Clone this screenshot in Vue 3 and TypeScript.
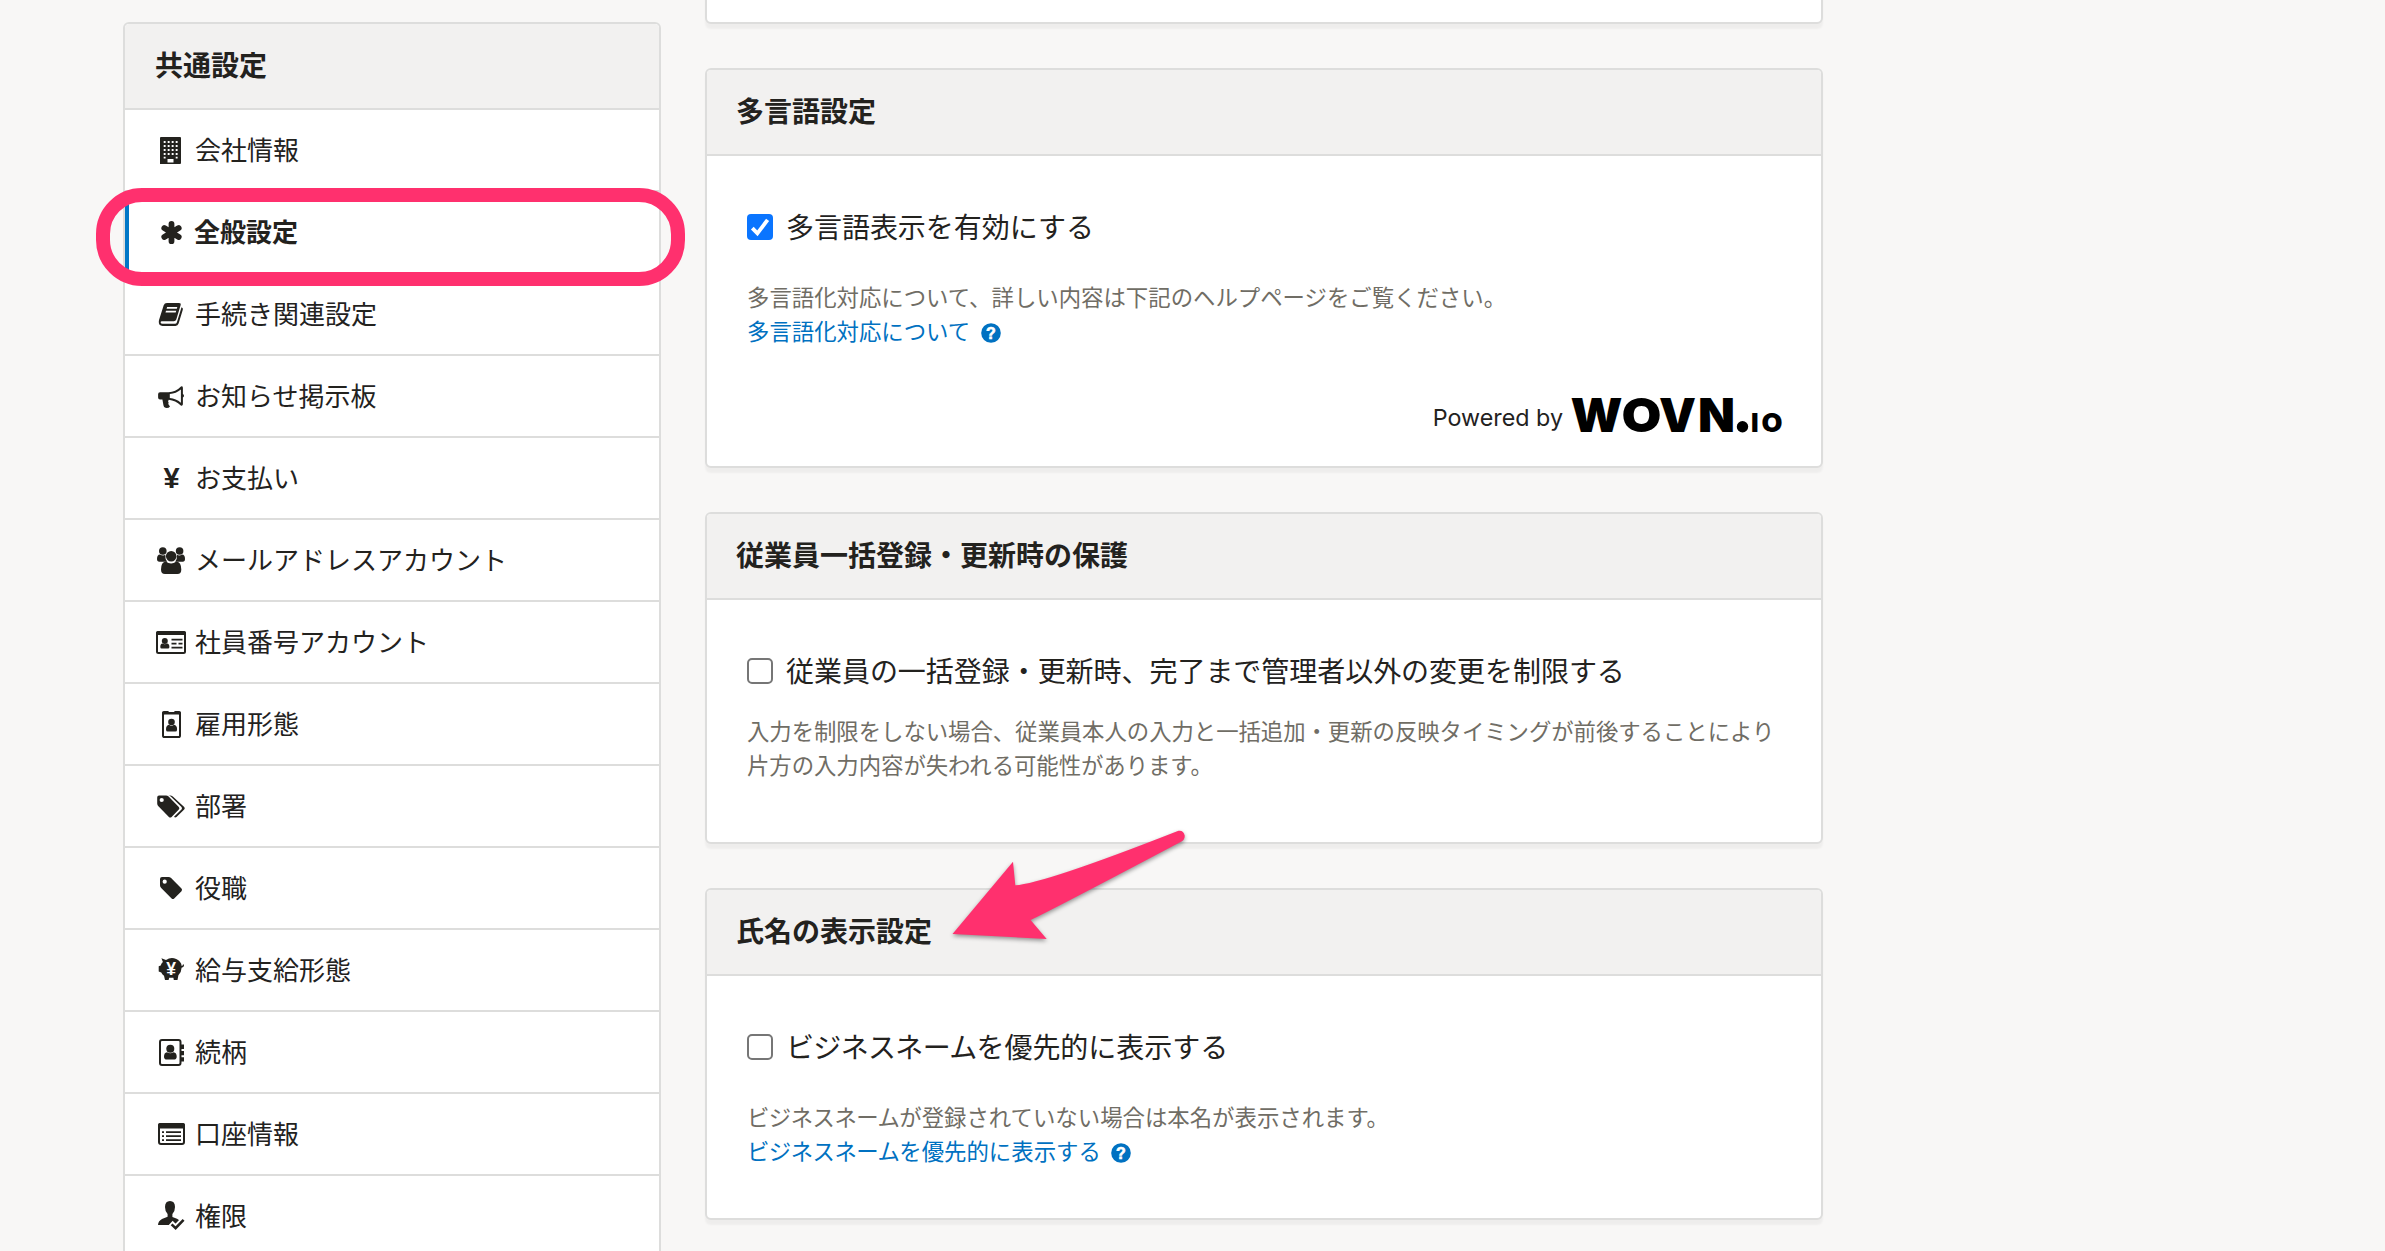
<script setup lang="ts">
interface MenuItem {
  label: string
  icon: string
  active?: boolean
}

const menu: MenuItem[] = [
  { label: '会社情報', icon: 'building' },
  { label: '全般設定', icon: 'asterisk', active: true },
  { label: '手続き関連設定', icon: 'book' },
  { label: 'お知らせ掲示板', icon: 'bullhorn' },
  { label: 'お支払い', icon: 'yen' },
  { label: 'メールアドレスアカウント', icon: 'users' },
  { label: '社員番号アカウント', icon: 'idcard' },
  { label: '雇用形態', icon: 'badge' },
  { label: '部署', icon: 'tags' },
  { label: '役職', icon: 'tag' },
  { label: '給与支給形態', icon: 'pig' },
  { label: '続柄', icon: 'address' },
  { label: '口座情報', icon: 'list' },
  { label: '権限', icon: 'usercheck' },
]
</script>

<template>
  <div class="page">
    <nav class="sidebar">
      <h2 class="head">共通設定</h2>
      <ul class="menu">
        <li v-for="item in menu" :key="item.label" class="item" :class="{ active: item.active }">
          <svg class="icon" viewBox="0 0 30 30" width="30" height="30">
            <g v-if="item.icon === 'building'">
              <path fill-rule="evenodd" d="M5 2H24Q25 2 25 3V28Q25 29 24 29H4V3Q4 2 5 2ZM11.5 24V27.5H17.5V24Z" />
              <path class="cut" stroke-width="1.9" stroke-dasharray="1.9 2.1" d="M7.7 7H22M7.7 11H22M7.7 15H22M7.7 19H22M7.7 22.6H9.6M19.7 22.6H22" />
            </g>
            <g v-else-if="item.icon === 'asterisk'" class="line" stroke-width="5.8" stroke-linecap="round">
              <path d="M15.5 6.8V24.2M8.3 11L22.7 20M22.7 11L8.3 20" />
            </g>
            <g v-else-if="item.icon === 'book'">
              <path fill-rule="evenodd" d="M11 4H23Q25.3 4 24.6 6.2L20.3 20.5Q19.7 22.3 17.8 22.3H6Q4.4 22.3 4.6 23.4Q4.8 24.8 6.6 24.8H19Q20.4 24.8 20.9 23.3L25.5 8.2Q27.4 9 26.8 10.8L22.6 24.6Q21.8 27 19.5 27H6.5Q2.5 26.6 2.8 22.5Q2.9 21 3.5 19.5L7.7 6.2Q8.5 4 11 4ZM11.1 8L10.6 9.7H20.8L21.3 8ZM10 11.8L9.5 13.5H19.7L20.2 11.8Z" />
            </g>
            <g v-else-if="item.icon === 'bullhorn'">
              <path fill-rule="evenodd" d="M4 11.2H12.5Q19.5 11 25 5.4Q26.8 5 26.9 6.8V13Q28 13.6 28 14.8Q28 16 26.9 16.5V23.2Q26.6 25.2 24.8 24.4Q19.5 19.5 12.8 18.7Q11.4 20 12.6 21.6Q11.6 23 13.3 24.6L14 25.4Q12.6 27.3 9.5 26.8Q7.7 26.5 7.5 24.5L6.4 18.5H4Q2.1 18.5 2.1 16.4V13.3Q2.1 11.2 4 11.2ZM24.9 8.4Q20 12.5 13.8 12.9V17Q20 17.6 24.9 21.7Z" />
            </g>
            <text v-else-if="item.icon === 'yen'" class="yen" x="15.5" y="25" text-anchor="middle" font-size="29">¥</text>
            <g v-else-if="item.icon === 'users'">
              <circle cx="6.8" cy="6" r="3.8" /><circle cx="23.6" cy="6" r="3.8" />
              <path d="M1 14Q1 9.5 4 9.5Q7 11.4 9.3 9.8Q9 14.5 11.2 16.8H3.4Q1 16.8 1 14ZM29 14Q29 9.5 26 9.5Q23.3 11.4 21.1 9.8Q21.2 14.5 19.2 16.8H26.8Q29 16.8 29 14Z" />
              <circle cx="15.2" cy="11.3" r="5.3" />
              <path d="M5 24.5Q5 17 9.8 16.4Q15 20.6 20.4 16.4Q25.3 17 25.3 24.5Q25.3 29 21.4 29H9Q5 29 5 24.5Z" />
            </g>
            <g v-else-if="item.icon === 'idcard'">
              <rect class="line" x="1" y="5" width="28" height="21" rx="1.5" stroke-width="2" />
              <path d="M0 8V6Q0 4 2 4H28Q30 4 30 6V8Z" />
              <circle cx="8.8" cy="14" r="3" />
              <path d="M4.3 20Q4.3 16.6 6.5 16.4Q8.8 18 11 16.4Q13.4 16.6 13.4 20Q13.4 21.6 12 21.6H5.6Q4.3 21.6 4.3 20Z" />
              <path class="line" stroke-width="1.8" d="M15.5 12.7H26.5M15.5 16.7H20.5M22.5 16.7H26.5M15.5 20.6H26.5" />
            </g>
            <g v-else-if="item.icon === 'badge'">
              <rect class="line" x="7" y="4" width="17" height="24" rx="1.6" stroke-width="2" />
              <path d="M6 5.5V3.5Q6 2 7.8 2H12.6V3.8H18.4V2H23.2Q25 2 25 3.5V5.5Z" />
              <circle cx="15.5" cy="13" r="3.3" />
              <path d="M10 20.4Q10 16.3 13 15.8Q15.5 17.6 18 15.8Q21.1 16.3 21.1 20.4Q21.1 22.6 19.3 22.6H11.7Q10 22.6 10 20.4Z" />
            </g>
            <g v-else-if="item.icon === 'tags'">
              <path fill-rule="evenodd" d="M3 4.5H10Q11.5 4.5 12.6 5.5L22.8 16Q24 17.3 22.8 18.6L15.6 26Q14.2 27 12.9 26L2.4 15.3Q1.2 14 1.2 12.5V6.4Q1.2 4.5 3 4.5ZM5.7 6.9A2.1 2.1 0 1 0 5.7 11.1A2.1 2.1 0 1 0 5.7 6.9Z" />
              <path d="M12.2 4.5H14.2Q15.6 4.5 16.8 5.6L28.2 16Q29.4 17.3 28.2 18.6L20.5 26Q19 27 18 25.7L25.5 18.5Q26.5 17.3 25.5 16L15 5.7Q13.7 4.6 12.2 4.5Z" />
            </g>
            <g v-else-if="item.icon === 'tag'">
              <path fill-rule="evenodd" d="M6 4H12.5Q14 4 15.1 5L25.5 15.6Q26.6 16.9 25.5 18.2L18.2 25.6Q16.9 26.6 15.6 25.6L5.2 15Q4 13.8 4 12.3V6Q4 4 6 4ZM8.7 6.6A2.1 2.1 0 1 0 8.7 10.8A2.1 2.1 0 1 0 8.7 6.6Z" />
            </g>
            <g v-else-if="item.icon === 'pig'">
              <path d="M5.4 3.2L10 5.1Q15 1.6 20.2 4.1Q25.2 6.5 25.7 10.9Q26.8 11 26.9 9.6H28Q28.2 12.3 25.6 12.7Q25.5 17 22.4 20.2L21.5 25H17.8L17.4 22.7H13.2L12.6 25H9L8 20.8Q6 19.5 5.3 17.6L2.7 16.6V11.3L4.7 10.6Q5.3 8.4 6.9 7.1Z" />
              <text class="coin" x="15.2" y="19.5" text-anchor="middle" font-size="17.5">¥</text>
            </g>
            <g v-else-if="item.icon === 'address'">
              <rect class="line" x="4" y="3" width="20.5" height="25" rx="2" stroke-width="2" />
              <path d="M25 7.5H28V12H25ZM25 14H28V18.2H25ZM25 20.2H28V24.5H25Z" />
              <circle cx="14.3" cy="11.8" r="4" />
              <path d="M8 19.6Q8 15.7 11 15.2Q14.3 17.4 17.6 15.2Q20.7 15.7 20.7 19.6Q20.7 22.4 18.6 22.4H10Q8 22.4 8 19.6Z" />
            </g>
            <g v-else-if="item.icon === 'list'">
              <rect class="line" x="3" y="5" width="25" height="20" rx="2" stroke-width="2" />
              <path d="M2 9.5V6Q2 4 4 4H27Q29 4 29 6V9.5Z" />
              <path class="line" stroke-width="1.8" d="M6 13.2H8M10 13.2H25M6 17.2H8M10 17.2H25M6 21.2H8M10 21.2H25" />
            </g>
            <g v-else>
              <path d="M14 0Q19 0 19 6Q19 10.5 16.4 13V16L21 17.8Q23.3 19 24 20.6L19.6 24H2Q2.1 20 6 18L11.6 15.8V13Q9 10.5 9 6Q9 0 14 0Z" />
              <path class="cut" stroke-width="6" d="M14.6 22L19.6 26.8L28.4 17.8" />
              <path class="line" stroke-width="2.6" d="M15.6 23.4L19.6 27.2L27.6 18.8" />
            </g>
          </svg>
          <span class="label">{{ item.label }}</span>
        </li>
      </ul>
    </nav>

    <main class="content">
      <section class="card stub"></section>

      <section class="card">
        <h2 class="head">多言語設定</h2>
        <div class="body lang">
          <label class="check">
            <svg class="box" viewBox="0 0 26 26" width="26" height="26">
              <rect width="26" height="26" rx="4" fill="#0a75ff" />
              <path d="M5.3 14.2L10.4 19.4L20.6 5.8" fill="none" stroke="#fff" stroke-width="3.8" />
            </svg>
            <span>多言語表示を有効にする</span>
          </label>
          <p class="help wide">
            多言語化対応について、詳しい内容は下記のヘルプページをご覧ください。<br />
            <a class="link">多言語化対応について<svg class="q" viewBox="0 0 20 20" width="20" height="20">
              <circle cx="10" cy="10" r="9.8" fill="#0071c1" />
              <text x="10" y="15.7" text-anchor="middle">?</text>
            </svg></a>
          </p>
          <div class="powered">
            <span>Powered by</span>
            <svg class="logo" viewBox="0 0 210 34" width="210" height="34">
              <text x="-0.5" y="34" font-size="46.7" textLength="52" lengthAdjust="spacingAndGlyphs">W</text>
              <text x="50.5" y="34" font-size="46.7" textLength="40" lengthAdjust="spacingAndGlyphs">O</text>
              <text x="88" y="34" font-size="46.7" textLength="37" lengthAdjust="spacingAndGlyphs">V</text>
              <text x="127" y="34" font-size="46.7" textLength="37" lengthAdjust="spacingAndGlyphs">N</text>
              <circle cx="171.5" cy="28.7" r="5.7" />
              <text class="io" x="180" y="34" font-size="26">i</text>
              <text class="io" x="190.5" y="34" font-size="26" textLength="21" lengthAdjust="spacingAndGlyphs">o</text>
            </svg>
          </div>
        </div>
      </section>

      <section class="card">
        <h2 class="head">従業員一括登録・更新時の保護</h2>
        <div class="body protect">
          <label class="check">
            <span class="box empty"></span>
            <span>従業員の一括登録・更新時、完了まで管理者以外の変更を制限する</span>
          </label>
          <p class="help tight">
            入力を制限をしない場合、従業員本人の入力と一括追加・更新の反映タイミングが前後することにより<br />
            片方の入力内容が失われる可能性があります。
          </p>
        </div>
      </section>

      <section class="card">
        <h2 class="head">氏名の表示設定</h2>
        <div class="body name">
          <label class="check">
            <span class="box empty"></span>
            <span><span class="kana">ビジネスネーム</span>を優先的に表示する</span>
          </label>
          <p class="help wide">
            <span class="kana">ビジネスネーム</span>が登録されていない場合は本名が表示されます。<br />
            <a class="link"><span class="kana">ビジネスネーム</span>を優先的に表示する<svg class="q" viewBox="0 0 20 20" width="20" height="20">
              <circle cx="10" cy="10" r="9.8" fill="#0071c1" />
              <text x="10" y="15.7" text-anchor="middle">?</text>
            </svg></a>
          </p>
        </div>
      </section>
    </main>

    <div class="ring"></div>
    <svg class="arrow" viewBox="0 0 250 130" width="250" height="130">
      <path d="M12.5 74L73 1.7L75.3 25.3Q103 24 238.5 -29.2Q243.5 -30 244.7 -24.5Q244.9 -20.5 241.5 -18.5Q112 50 90.6 60L106.7 79Z" />
    </svg>
  </div>
</template>

<style>
body {
  margin: 0;
  background: #f8f7f6;
}
</style>

<style scoped>
.page {
  position: relative;
  box-sizing: border-box;
  width: 2385px;
  height: 1251px;
  overflow: hidden;
  display: flex;
  align-items: flex-start;
  gap: 44px;
  padding-left: 123px;
  background: #f8f7f6;
  color: #23221e;
  font-family: "Noto Sans CJK JP", sans-serif;
}
.sidebar {
  box-sizing: border-box;
  width: 538px;
  margin-top: 22px;
  border: 2px solid #dddddc;
  border-radius: 6px;
  background: #fff;
  overflow: hidden;
}
.head {
  box-sizing: border-box;
  height: 86px;
  margin: 0;
  padding-left: 29px;
  border-bottom: 2px solid #dddddc;
  border-radius: 4px 4px 0 0;
  background: #f2f1f0;
  font-size: 28px;
  font-weight: 700;
  line-height: 81px;
}
.sidebar .head {
  padding-left: 30px;
}
.menu {
  margin: 0;
  padding: 0;
  list-style: none;
}
.item {
  box-sizing: border-box;
  height: 82px;
  display: flex;
  align-items: center;
  gap: 9px;
  padding-left: 31px;
  border-bottom: 2px solid #dddddc;
  font-size: 26px;
  line-height: 40px;
}
.label {
  padding-bottom: 2px;
}
.item.active {
  padding-left: 27px;
  border-left: 4px solid #0077c7;
  font-weight: 700;
}
.active .label {
  margin-left: -1px;
}
.icon {
  flex: none;
  overflow: visible;
  fill: #23221e;
}
.icon .line {
  fill: none;
  stroke: #23221e;
}
.icon .cut {
  fill: none;
  stroke: #fff;
}
.yen,
.coin {
  font-family: "Liberation Sans", sans-serif;
  font-weight: 700;
}
.icon .coin {
  fill: #fff;
}
.content {
  width: 1118px;
  display: flex;
  flex-direction: column;
  gap: 44px;
}
.card {
  box-sizing: border-box;
  border: 2px solid #dddddc;
  border-radius: 6px;
  background: #fff;
  box-shadow: 0 5px 2px rgba(0, 0, 0, 0.04);
}
.stub {
  height: 34px;
  margin-top: -10px;
}
.body {
  padding: 50px 40px 0;
}
.lang {
  padding-bottom: 34px;
}
.protect {
  padding-bottom: 61px;
}
.name {
  padding-bottom: 51px;
}
.check {
  height: 42px;
  display: flex;
  align-items: center;
  gap: 13px;
  font-size: 28px;
  line-height: 40px;
  letter-spacing: -0.04px;
  white-space: nowrap;
}
.check > span:last-child {
  padding-bottom: 2px;
}
.box {
  flex: none;
  box-sizing: border-box;
  width: 26px;
  height: 26px;
}
.box.empty {
  border: 2px solid #767676;
  border-radius: 5px;
}
.help {
  margin: 21px 0 0;
  color: #706d65;
  font-size: 22.4px;
  line-height: 34px;
  white-space: nowrap;
}
.help.wide {
  margin-top: 31px;
}
.help.tight {
  letter-spacing: -0.05px;
}
.kana {
  letter-spacing: -0.024em;
}
.link {
  color: #0071c1;
}
.q {
  margin-left: 10.5px;
  vertical-align: -2.5px;
}
.q text {
  fill: #fff;
  stroke: #fff;
  stroke-width: 0.6px;
  font: 700 16px "Liberation Sans", sans-serif;
}
.powered {
  height: 34px;
  margin-top: 51px;
  display: flex;
  justify-content: flex-end;
  gap: 8px;
  font-family: Inter, sans-serif;
  font-size: 23.3px;
  line-height: 40px;
}
.logo {
  overflow: visible;
  font-family: Inter, sans-serif;
  font-weight: 900;
  fill: #000;
}
.io {
  text-transform: uppercase;
}
.ring {
  position: absolute;
  box-sizing: border-box;
  left: 96px;
  top: 188px;
  width: 589px;
  height: 98px;
  border: 14px solid #ff306e;
  border-radius: 46px;
}
.arrow {
  position: absolute;
  left: 940px;
  top: 860px;
  overflow: visible;
  fill: #ff306e;
  filter: drop-shadow(0 2px 2px rgba(0, 0, 0, 0.4));
}
</style>
